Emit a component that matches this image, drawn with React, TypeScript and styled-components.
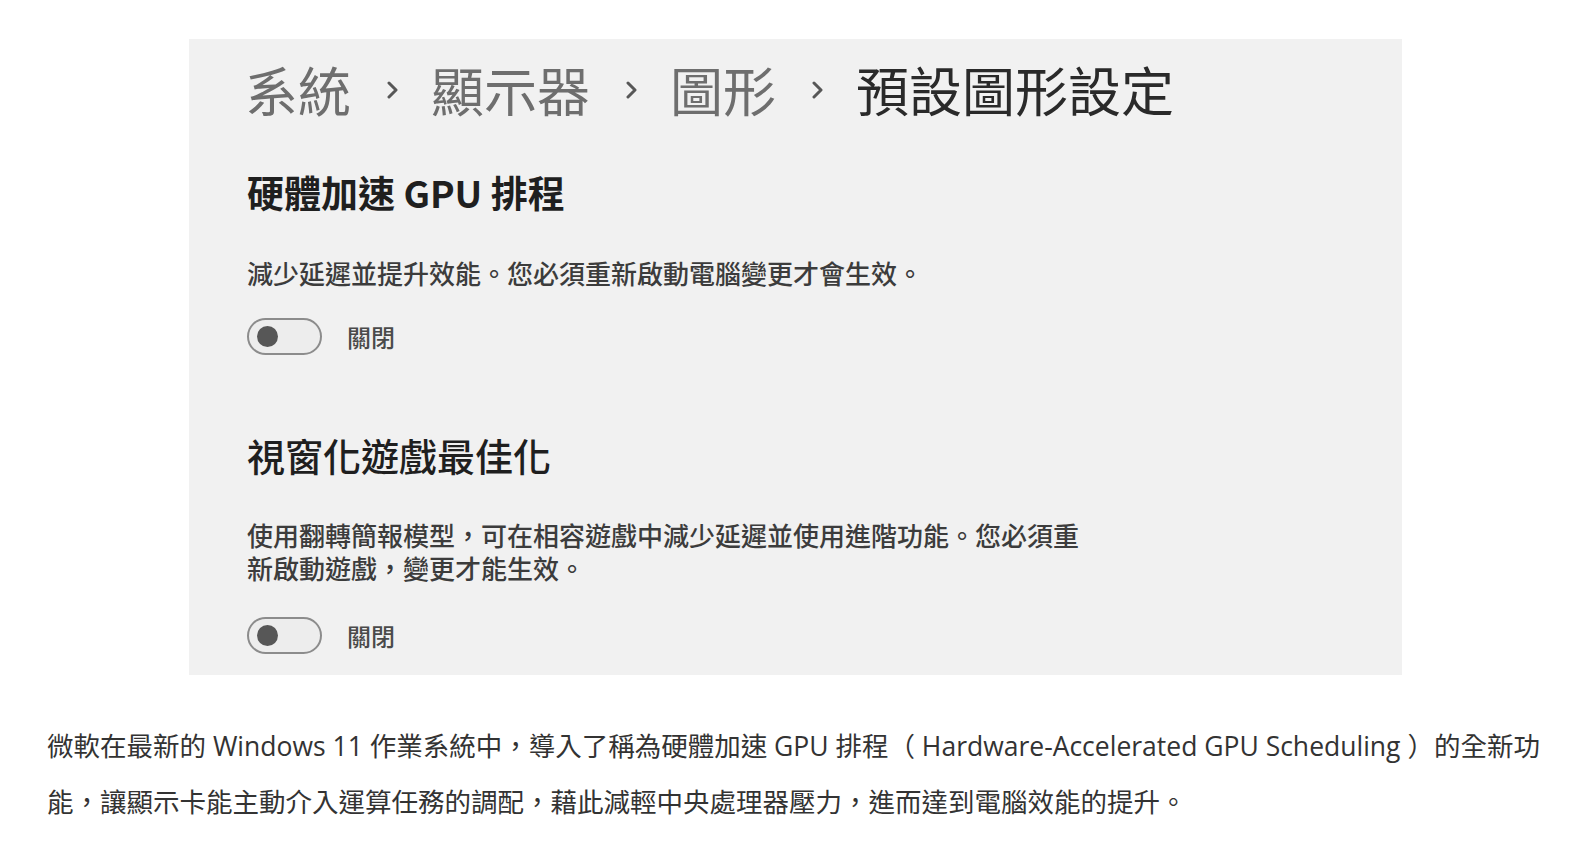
import { FC } from "react"
import styled, { createGlobalStyle } from "styled-components"

const GlobalStyle = createGlobalStyle`
  html, body {
    margin: 0;
    padding: 0;
    background: #ffffff;
  }
`

const crumbs = ["系統", "顯示器", "圖形"]

const Chevron: FC = () => (
  <ChevronSvg width="16" height="18" viewBox="0 0 16 18">
    <polyline points="4,2 11,9 4,16" fill="none" stroke="#575757" strokeWidth="3" strokeLinecap="round" strokeLinejoin="round" />
  </ChevronSvg>
)

const Toggle: FC<{ label: string; gap?: number }> = ({ label, gap }) => (
  <ToggleRow $gap={gap}>
    <Switch>
      <Knob />
    </Switch>
    <ToggleLabel>{label}</ToggleLabel>
  </ToggleRow>
)

export default function App() {
  return (
    <Page>
      <GlobalStyle />
      <Figure>
        <Breadcrumb>
          {crumbs.map((c) => (
            <CrumbGroup key={c}>
              <Crumb>{c}</Crumb>
              <Chevron />
            </CrumbGroup>
          ))}
          <Crumb $current>預設圖形設定</Crumb>
        </Breadcrumb>

        <Section>
          <Heading $size={37} $weight={700}>硬體加速 GPU 排程</Heading>
          <Desc>減少延遲並提升效能。您必須重新啟動電腦變更才會生效。</Desc>
          <Toggle label="關閉" />
        </Section>

        <Section $gap={81}>
          <Heading $size={38} $weight={500}>視窗化遊戲最佳化</Heading>
          <Desc>
            使用翻轉簡報模型，可在相容遊戲中減少延遲並使用進階功能。您必須重
            <br />
            新啟動遊戲，變更才能生效。
          </Desc>
          <Toggle label="關閉" gap={32} />
        </Section>
      </Figure>

      <Body>
        微軟在最新的 Windows 11 作業系統中，導入了稱為硬體加速 GPU 排程（ Hardware-Accelerated GPU Scheduling ）的全新功能，讓顯示卡能主動介入運算任務的調配，藉此減輕中央處理器壓力，進而達到電腦效能的提升。
      </Body>
    </Page>
  )
}

const Page = styled.div`
  padding: 39px 30px 0 47px;
  display: flex;
  flex-direction: column;
`

const Figure = styled.div`
  margin-left: 142px;
  width: 1213px;
  height: 636px;
  box-sizing: border-box;
  background: #f1f1f1;
  padding: 24px 0 0 58px;
  display: flex;
  flex-direction: column;
  font-family: "Noto Sans CJK TC", sans-serif;
`

const Breadcrumb = styled.div`
  display: flex;
  align-items: center;
  height: 52px;
`

const CrumbGroup = styled.div`
  display: flex;
  align-items: center;
`

const Crumb = styled.span<{ $current?: boolean }>`
  font-size: 53px;
  line-height: 1;
  font-weight: 400;
  color: ${({ $current }) => ($current ? "#2a2a2a" : "#6e6e6e")};
  margin-left: -2px;
`

const ChevronSvg = styled.svg`
  margin: 2px 32px 0 34px;
`

const Section = styled.div<{ $gap?: number }>`
  display: flex;
  flex-direction: column;
  margin-top: ${({ $gap }) => $gap ?? 59}px;
`

const Heading = styled.h2<{ $size: number; $weight: number }>`
  margin: 0;
  font-size: ${({ $size }) => $size}px;
  line-height: 37px;
  font-weight: ${({ $weight }) => $weight};
  color: #1f1f1f;
`

const Desc = styled.p`
  margin: 45px 0 0;
  font-size: 26px;
  line-height: 33.5px;
  font-weight: 500;
  color: #3c3c3c;
`

const ToggleRow = styled.div<{ $gap?: number }>`
  display: flex;
  align-items: center;
  gap: 25px;
  margin-top: ${({ $gap }) => $gap ?? 28}px;
`

const Switch = styled.div`
  width: 75px;
  height: 37px;
  box-sizing: border-box;
  border: 2px solid #8c8c8c;
  border-radius: 19px;
  background: #ededed;
  display: flex;
  align-items: center;
  padding-left: 8px;
`

const Knob = styled.div`
  width: 21px;
  height: 21px;
  border-radius: 50%;
  background: #575757;
`

const ToggleLabel = styled.span`
  font-size: 24px;
  line-height: 1;
  font-weight: 500;
  color: #4a4a4a;
  margin-top: 1px;
`

const Body = styled.p`
  margin: 43px 0 0;
  font-family: "Open Sans", "Noto Sans CJK TC", sans-serif;
  font-size: 26.5px;
  line-height: 56px;
  color: #333333;
`
